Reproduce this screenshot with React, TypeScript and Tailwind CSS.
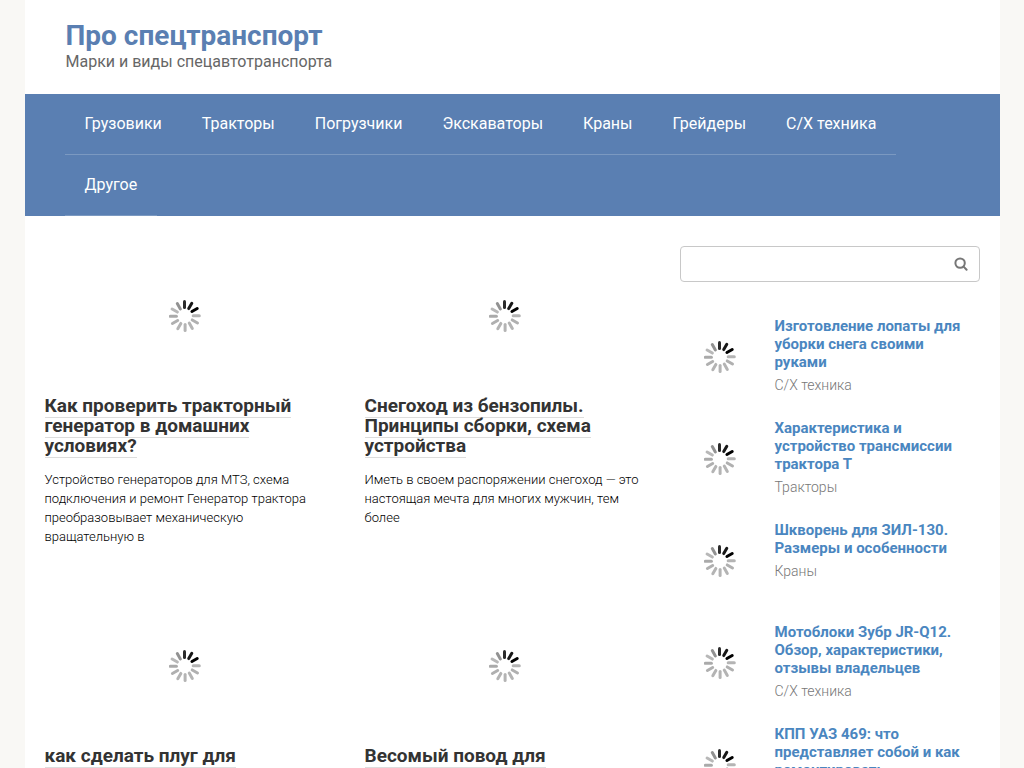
import { useState, type FormEvent } from "react"

const menu = ["Грузовики", "Тракторы", "Погрузчики", "Экскаваторы", "Краны", "Грейдеры", "С/Х техника", "Другое"]

const posts = [
  {
    title: "Как проверить тракторный генератор в домашних условиях?",
    excerpt:
      "Устройство генераторов для МТЗ, схема подключения и ремонт Генератор трактора преобразовывает механическую вращательную в",
  },
  {
    title: "Снегоход из бензопилы. Принципы сборки, схема устройства",
    excerpt: "Иметь в своем распоряжении снегоход — это настоящая мечта для многих мужчин, тем более",
  },
  { title: "как сделать плуг для", excerpt: "" },
  { title: "Весомый повод для", excerpt: "" },
]

const popular = [
  { title: "Изготовление лопаты для уборки снега своими руками", category: "С/Х техника" },
  { title: "Характеристика и устройство трансмиссии трактора Т", category: "Тракторы" },
  { title: "Шкворень для ЗИЛ-130. Размеры и особенности", category: "Краны" },
  { title: "Мотоблоки Зубр JR-Q12. Обзор, характеристики, отзывы владельцев", category: "С/Х техника" },
  { title: "КПП УАЗ 469: что представляет собой и как ремонтировать", category: "" },
]

// clockwise from the top
const spokes = [
  "#2b2b2b", "#181818", "#000000", "#b4b4b4", "#b0b0b0", "#b4b4b4",
  "#b4b4b4", "#b4b4b4", "#b0b0b0", "#aaaaaa", "#b8b8b8", "#929292",
]

function Spinner() {
  return (
    <svg viewBox="0 0 32 32" className="h-8 w-8" aria-hidden="true">
      {spokes.map((color, i) => (
        <line
          key={i}
          x1="15.5"
          y1="1.5"
          x2="15.5"
          y2="7.6"
          stroke={color}
          strokeWidth="3"
          strokeLinecap="round"
          transform={`rotate(${i * 30} 15.8 16)`}
        />
      ))}
    </svg>
  )
}

function SearchForm() {
  const [query, setQuery] = useState("")

  function handleSubmit(e: FormEvent) {
    e.preventDefault()
  }

  return (
    <form onSubmit={handleSubmit} className="flex h-9 rounded border border-[#c8c8c8] bg-white">
      <input
        type="search"
        aria-label="Поиск"
        value={query}
        onChange={(e) => setQuery(e.target.value)}
        className="min-w-0 flex-1 px-3 text-sm focus:outline-none"
      />
      <button type="submit" aria-label="Найти" className="flex w-9 items-center justify-center text-[#777]">
        <svg viewBox="0 0 14 14" className="h-3.5 w-3.5" fill="none" stroke="currentColor" strokeWidth="2">
          <circle cx="6.1" cy="6.1" r="4.7" />
          <path d="M9.6 9.6L12.6 12.8" strokeLinecap="round" />
        </svg>
      </button>
    </form>
  )
}

export default function App() {
  return (
    <div className="min-h-screen bg-[#f9f8f5] font-['Roboto',sans-serif] text-[#333]">
      <div className="mx-auto min-h-screen max-w-[975px] bg-white">
        <header className="px-[41px] pt-5 pb-[22px]">
          <a href="#" className="block text-[28px] leading-8 font-bold text-[#5a7fb2]">
            Про спецтранспорт
          </a>
          <p className="text-base leading-5 text-[#666]">Марки и виды спецавтотранспорта</p>
        </header>

        <nav className="bg-[#5a7fb2] px-10">
          <ul className="flex flex-wrap">
            {menu.map((item) => (
              <li key={item} className="border-b border-[#7b99c1]">
                <a href="#" className="block px-5 text-base leading-[60px] text-white">
                  {item}
                </a>
              </li>
            ))}
          </ul>
        </nav>

        <div className="flex items-start gap-[35px] px-5 pt-[30px]">
          <main className="grid flex-1 grid-cols-2 gap-x-10 gap-y-[50px]">
            {posts.map((post) => (
              <article key={post.title}>
                <div className="flex h-[140px] items-center justify-center">
                  <Spinner />
                </div>
                <h2 className="mt-2.5 text-[19px] leading-5 font-bold">
                  <a href="#" className="border-b border-[#ddd]">
                    {post.title}
                  </a>
                </h2>
                <p className="mt-3.5 text-[13px] leading-[19px] font-light text-black">{post.excerpt}</p>
              </article>
            ))}
          </main>

          <aside className="w-[300px] shrink-0">
            <SearchForm />
            <ul className="mt-[35px] flex flex-col gap-[22px]">
              {popular.map((item) => (
                <li key={item.title} className="flex min-h-20 gap-[15px]">
                  <div className="flex h-20 w-20 shrink-0 items-center justify-center">
                    <Spinner />
                  </div>
                  <div>
                    <a href="#" className="block text-[15px] leading-[18px] font-bold text-[#4a86c0]">
                      {item.title}
                    </a>
                    <p className="mt-1 text-sm leading-5 font-light text-[#777]">{item.category}</p>
                  </div>
                </li>
              ))}
            </ul>
          </aside>
        </div>
      </div>
    </div>
  )
}
